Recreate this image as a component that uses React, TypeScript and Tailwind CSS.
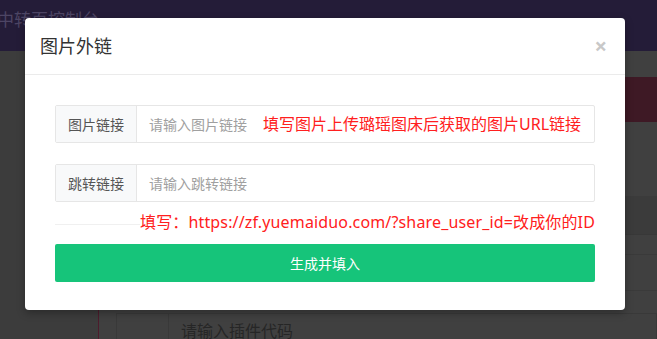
import React from 'react';

const font = { fontFamily: '"Noto Sans", "Noto Sans CJK SC", sans-serif' };

function Backdrop() {
  return (
    <div className="flex flex-col w-full h-full">
      {/* top bar */}
      <div className="h-[51px] shrink-0 bg-[#241c38] flex items-start pt-[8px]">
        <span className="text-[17px] text-[#4d4564] -ml-[3px] leading-[24px]">中转页控制台</span>
      </div>
      <div className="flex flex-1 min-h-0">
        <div className="w-[99px] shrink-0 bg-[#3c3c3c] border-r border-[#4d1b2c]" />
        <div className="flex-1 flex flex-col bg-[#404040] overflow-hidden">
          <div className="h-[26px] shrink-0" />
          <div className="h-[45px] shrink-0 bg-[#3e1925]" />
          <div className="h-[74px] shrink-0" />
          <div className="h-[39px] shrink-0 bg-[#3b3b3b] border-b border-[#383838]" />
          <div className="h-[20px] shrink-0 border-b border-[#3a3a3a]" />
          <div className="h-[36px] shrink-0 border-b border-[#3a3a3a]" />
          <div className="h-[22px] shrink-0" />
          <div className="flex pl-[17px] shrink-0">
            <div className="flex flex-1 h-[40px] border border-[#393939]">
              <div className="w-[52px] border-r border-[#393939]" />
              <div className="pl-[12px] pt-[5px] text-[16px] text-[#262626] leading-[24px]">请输入插件代码</div>
            </div>
          </div>
        </div>
      </div>
    </div>
  );
}

function InputGroup({ label, placeholder, hint }: { label: string; placeholder: string; hint?: string }) {
  return (
    <div className="flex h-[38px] border border-[#e6e6e6] rounded-[2px]">
      <div className="w-[81px] bg-[#f8f9fa] border-r border-[#e6e6e6] flex items-center justify-center text-[14px] text-[#555]">
        {label}
      </div>
      <div className="flex-1 flex items-center pl-[12px]">
        <span className="text-[14px] text-[#a0a0a0]">{placeholder}</span>
        {hint && <span className="ml-[16px] text-[16px] text-[#ff2020]">{hint}</span>}
      </div>
    </div>
  );
}

export default function App() {
  return (
    <div className="relative w-[657px] h-[339px] overflow-hidden" style={font}>
      <Backdrop />

      {/* modal */}
      <div className="absolute left-[25px] top-[18px] w-[600px] h-[292px] bg-white rounded-[4px] shadow-[0_3px_9px_rgba(0,0,0,0.3)] flex flex-col">
        <div className="h-[57px] border-b border-[#ebebeb] flex items-center justify-between pl-[15px] pr-[18px]">
          <span className="text-[18px] text-[#333]">图片外链</span>
          <span className="text-[22px] font-bold text-[#c8c8c8] leading-none -mt-[2px]">×</span>
        </div>

        <div className="flex flex-col px-[30px] pt-[30px]">
          <InputGroup label="图片链接" placeholder="请输入图片链接" hint="填写图片上传璐瑶图床后获取的图片URL链接" />
          <div className="h-[21px]" />
          <InputGroup label="跳转链接" placeholder="请输入跳转链接" />

          <div className="flex items-center h-[22px] mt-[9px]">
            <div className="w-[85px] h-px bg-[#f0f0f0] mt-[4px]" />
            <span className="flex-1 text-right text-[16px] text-[#ff2020] whitespace-nowrap tracking-[0.15px]">
              填写：https://zf.yuemaiduo.com/?share_user_id=改成你的ID
            </span>
          </div>

          <button className="mt-[11px] h-[38px] w-full bg-[#16c47a] rounded-[2px] text-white text-[14px]">
            生成并填入
          </button>
        </div>
      </div>
    </div>
  );
}
